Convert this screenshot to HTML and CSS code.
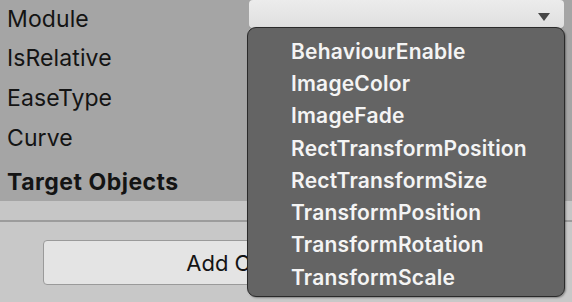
FILE: index.html
```html
<!DOCTYPE html>
<html>
<head>
<meta charset="utf-8">
<link rel="stylesheet" href="styles.css">
</head>
<body>
<div class="inspector">
  <div class="props">
    <div class="row">
      <span class="label">Module</span>
      <div class="field"><span class="arrow"></span></div>
    </div>
    <div class="row"><span class="label">IsRelative</span></div>
    <div class="row"><span class="label">EaseType</span></div>
    <div class="row"><span class="label">Curve</span></div>
    <div class="row head"><span class="label bold">Target Objects</span></div>
  </div>
  <div class="strip"></div>
  <div class="footer">
    <button class="add">Add Component</button>
  </div>
</div>
<div class="menu">
  <div class="item">BehaviourEnable</div>
  <div class="item">ImageColor</div>
  <div class="item">ImageFade</div>
  <div class="item">RectTransformPosition</div>
  <div class="item">RectTransformSize</div>
  <div class="item">TransformPosition</div>
  <div class="item">TransformRotation</div>
  <div class="item">TransformScale</div>
</div>
</body>
</html>
```
FILE: styles.css
```css
html, body {
  margin: 0;
  padding: 0;
  width: 572px;
  height: 302px;
  overflow: hidden;
  font-family: Inter, "Liberation Sans", sans-serif;
}
.inspector {
  display: flex;
  flex-direction: column;
  height: 302px;
  background: #c8c8c8;
}
.props {
  background: #a5a5a5;
  height: 201px;
  display: flex;
  flex-direction: column;
}
.row {
  height: 40px;
  display: flex;
  align-items: center;
  padding-left: 7px;
  position: relative;
}
.row:first-child {
  height: 38px;
}
.row.head {
  height: 43px;
  align-items: flex-end;
  padding-bottom: 5px;
  box-sizing: border-box;
}
.label {
  font-size: 23px;
  color: #141414;
  letter-spacing: 0.1px;
}
.label.bold {
  font-weight: 700;
  letter-spacing: 0.5px;
}
.field {
  position: absolute;
  left: 249px;
  top: 0;
  width: 315px;
  height: 28px;
  border-radius: 4px;
  background: linear-gradient(#ececec, #dfdfdf);
  box-shadow: 0 1px 0 #8c8c8c;
}
.arrow {
  position: absolute;
  right: 14px;
  top: 13px;
  width: 0;
  height: 0;
  border-left: 6px solid transparent;
  border-right: 6px solid transparent;
  border-top: 8px solid #474747;
}
.strip {
  height: 19px;
  background: #c6c6c6;
  border-bottom: 2px solid #9c9c9c;
}
.footer {
  flex: 1;
  padding: 18px 0 0 43px;
}
.add {
  display: block;
  width: 456px;
  height: 45px;
  background: #e4e4e4;
  border: 1px solid #9a9a9a;
  border-radius: 4px;
  font-family: Inter, "Liberation Sans", sans-serif;
  font-size: 22px;
  color: #141414;
  padding: 0;
}
.menu {
  position: absolute;
  left: 247px;
  top: 27px;
  width: 318px;
  height: 270px;
  box-sizing: border-box;
  background: #646464;
  border: 1px solid #2a2a2a;
  border-radius: 9px;
  box-shadow: 1px 1px 2px rgba(0,0,0,0.35);
  padding-top: 7px;
  padding-left: 43px;
}
.item {
  height: 32.3px;
  display: flex;
  align-items: center;
  font-size: 21px;
  font-weight: 600;
  letter-spacing: 0.2px;
  color: #f4f4f4;
}
```
